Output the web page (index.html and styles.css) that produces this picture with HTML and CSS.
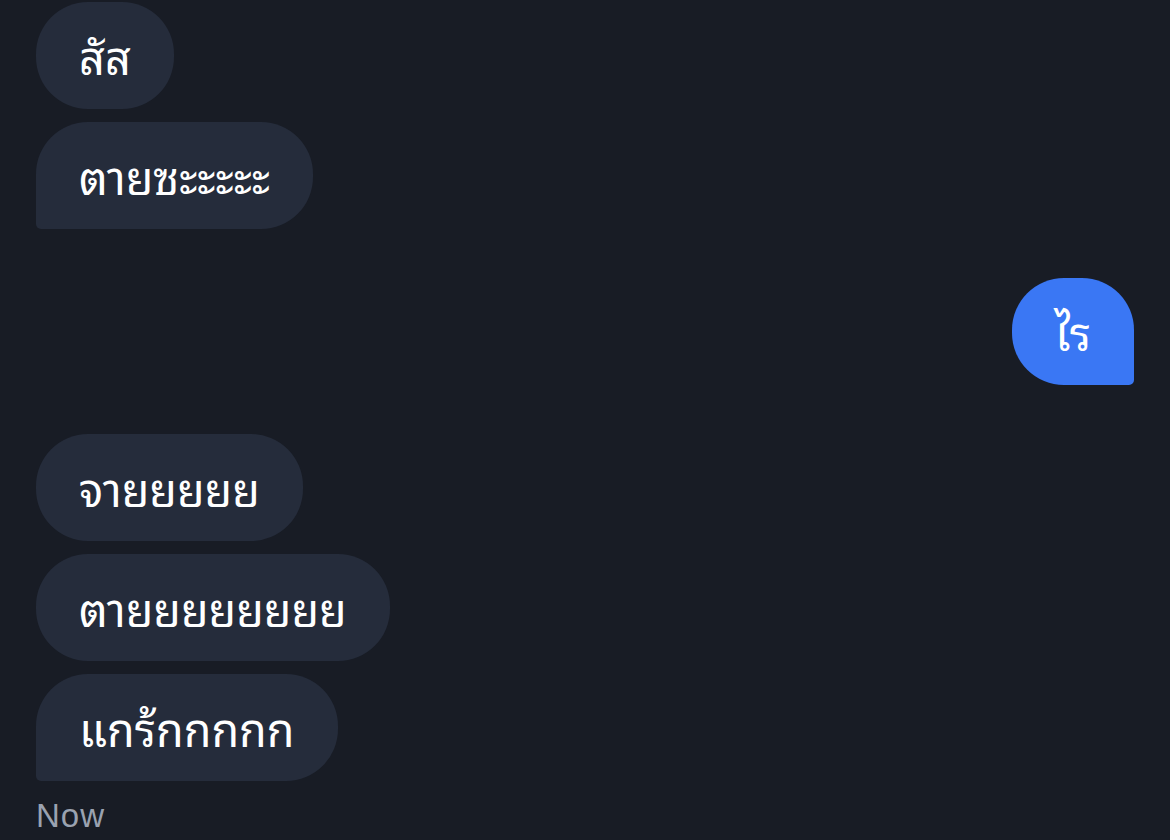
FILE: index.html
```html
<!DOCTYPE html>
<html lang="th">
<head>
  <meta charset="UTF-8">
  <title>Chat</title>
  <link rel="stylesheet" href="styles.css">
</head>
<body>
  <div class="thread">
    <div class="group in">
      <div class="bubble">สัส</div>
      <div class="bubble">ตายซะะะะะ</div>
    </div>

    <div class="group out">
      <div class="bubble">ไร</div>
    </div>

    <div class="group in">
      <div class="bubble">จายยยยย</div>
      <div class="bubble">ตายยยยยยยย</div>
      <div class="bubble">แกร้กกกกก</div>
    </div>

    <div class="stamp">Now</div>
  </div>
</body>
</html>
```

FILE: styles.css
```css
html, body {
  margin: 0;
  padding: 0;
  overflow: hidden;
  background: #181c25;
  font-family: 'Thonburi', 'Noto Sans Thai Looped', 'Loma', 'Garuda', 'Noto Sans Thai', 'Noto Sans', sans-serif;
  color: #fff;
}

.thread {
  display: flex;
  flex-direction: column;
  gap: 49px;
  padding: 2px 36px 0 36px;
}

.group {
  display: flex;
  flex-direction: column;
  gap: 13px;
}

.group.in {
  align-items: flex-start;
}

.group.out {
  align-items: flex-end;
}

.bubble {
  box-sizing: border-box;
  height: 107px;
  display: flex;
  align-items: center;
  padding: 0 43px 2px 43px;
  font-size: 45px;
  border-radius: 52px;
  background: #252c3b;
  white-space: nowrap;
}

.in .bubble:last-child {
  border-bottom-left-radius: 5px;
}

.out .bubble {
  background: #3a77f4;
  border-bottom-right-radius: 5px;
}

.stamp {
  margin-top: -33px;
  font-family: 'Liberation Sans', Arial, sans-serif;
  font-size: 33px;
  letter-spacing: 1px;
  color: #9aa2b0;
}
```
